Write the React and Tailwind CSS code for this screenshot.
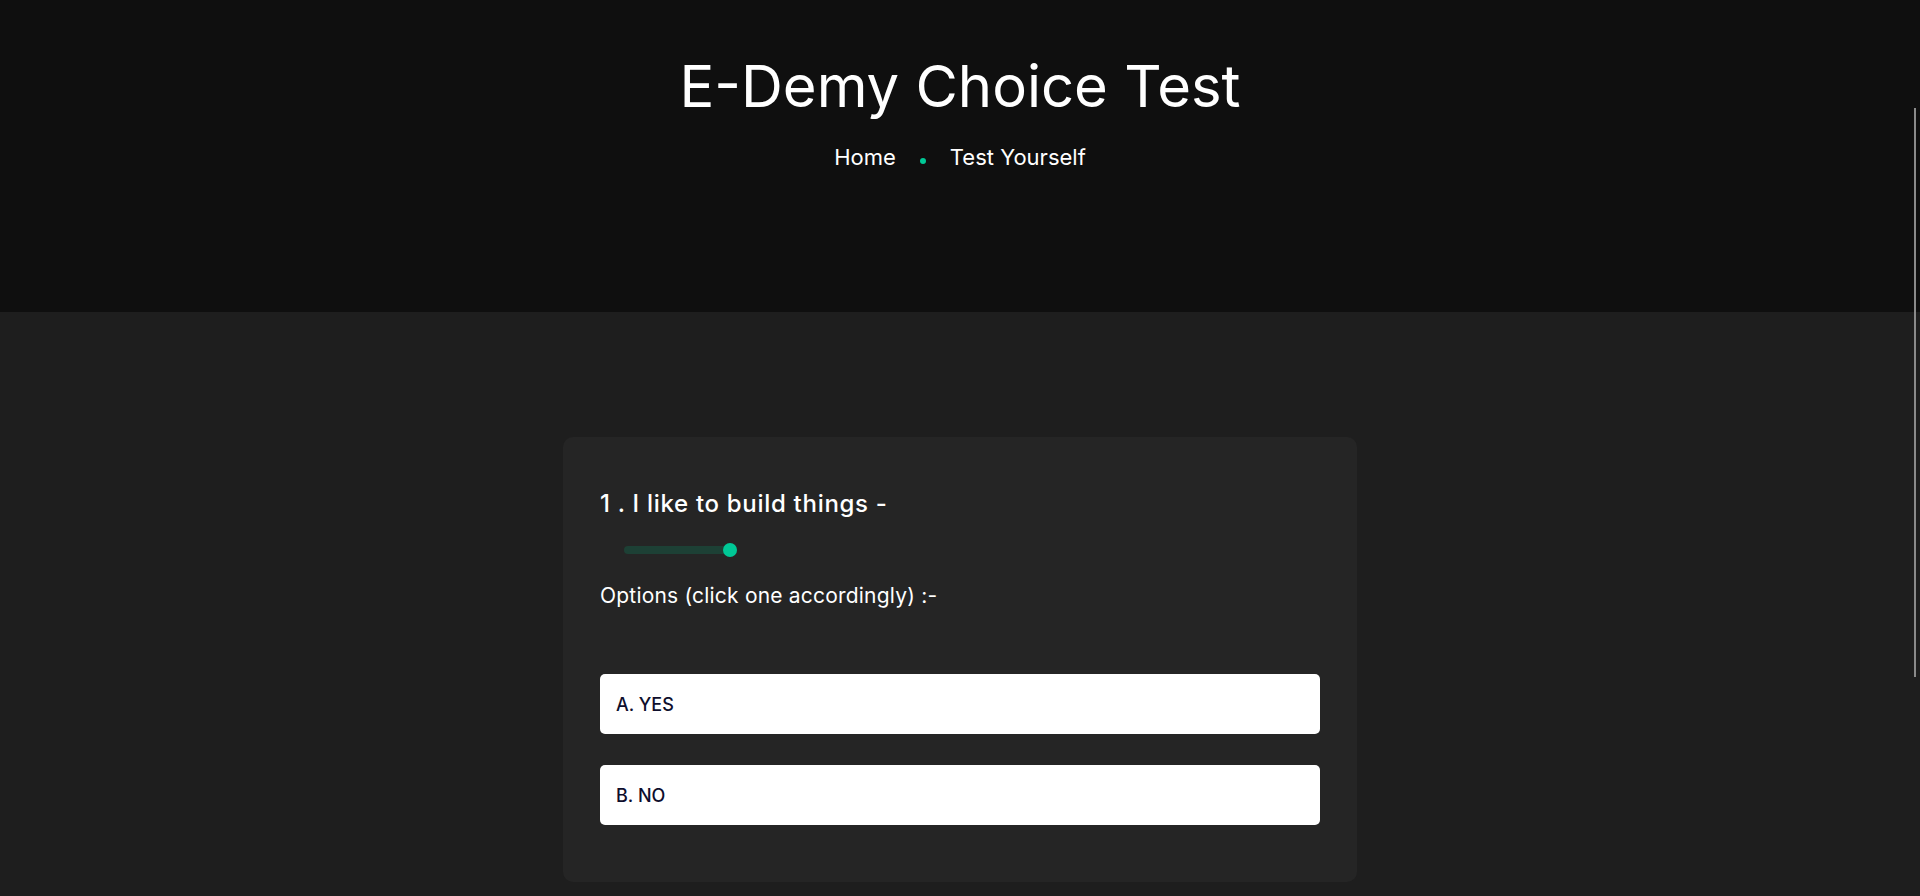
export default function App() {
  const font = { fontFamily: 'Inter, "Noto Sans", sans-serif' };
  return (
    <div className="min-h-[896px] bg-[#1e1e1e] relative" style={font}>
      <header className="h-[312px] bg-[#0f0f0f] flex flex-col items-center pt-[52px]">
        <h1 className="text-[58px] leading-[68px] text-white font-normal">E-Demy Choice Test</h1>
        <nav className="mt-[22px] flex items-center text-[22px] leading-[30px] text-white">
          <span>Home</span>
          <span className="mx-[24px] w-[6px] h-[6px] rounded-full bg-[#00c896] mt-[8px]"></span>
          <span>Test Yourself</span>
        </nav>
      </header>
      <main className="flex justify-center pt-[125px] pb-[20px]">
        <div className="w-[794px] bg-[#252525] rounded-[10px] px-[37px] pt-[52px] pb-[57px]">
          <h3 className="text-[24px] font-medium text-white leading-[30px] tracking-[0.7px]">1 . I like to build things -</h3>
          <div className="ml-[24px] mt-[27px] relative w-[113px] h-[8px]">
            <div className="absolute inset-0 rounded-full bg-[#1d4035]"></div>
            <div className="absolute right-0 top-1/2 -translate-y-1/2 w-[14px] h-[14px] rounded-full bg-[#00c896]"></div>
          </div>
          <p className="mt-[29px] text-[21px] text-white leading-[26px] tracking-[0.2px]">Options (click one accordingly) :-</p>
          <div className="mt-[65px] flex flex-col gap-[31px]">
            <button className="h-[60px] bg-white rounded-[5px] text-left px-[16px] text-[18px] font-medium text-[#0e0e2c]">A. YES</button>
            <button className="h-[60px] bg-white rounded-[5px] text-left px-[16px] text-[18px] font-medium text-[#0e0e2c]">B. NO</button>
          </div>
        </div>
      </main>
      <div className="fixed right-[4px] top-[108px] w-[2px] h-[569px] bg-[#8a8a8a]"></div>
    </div>
  );
}
